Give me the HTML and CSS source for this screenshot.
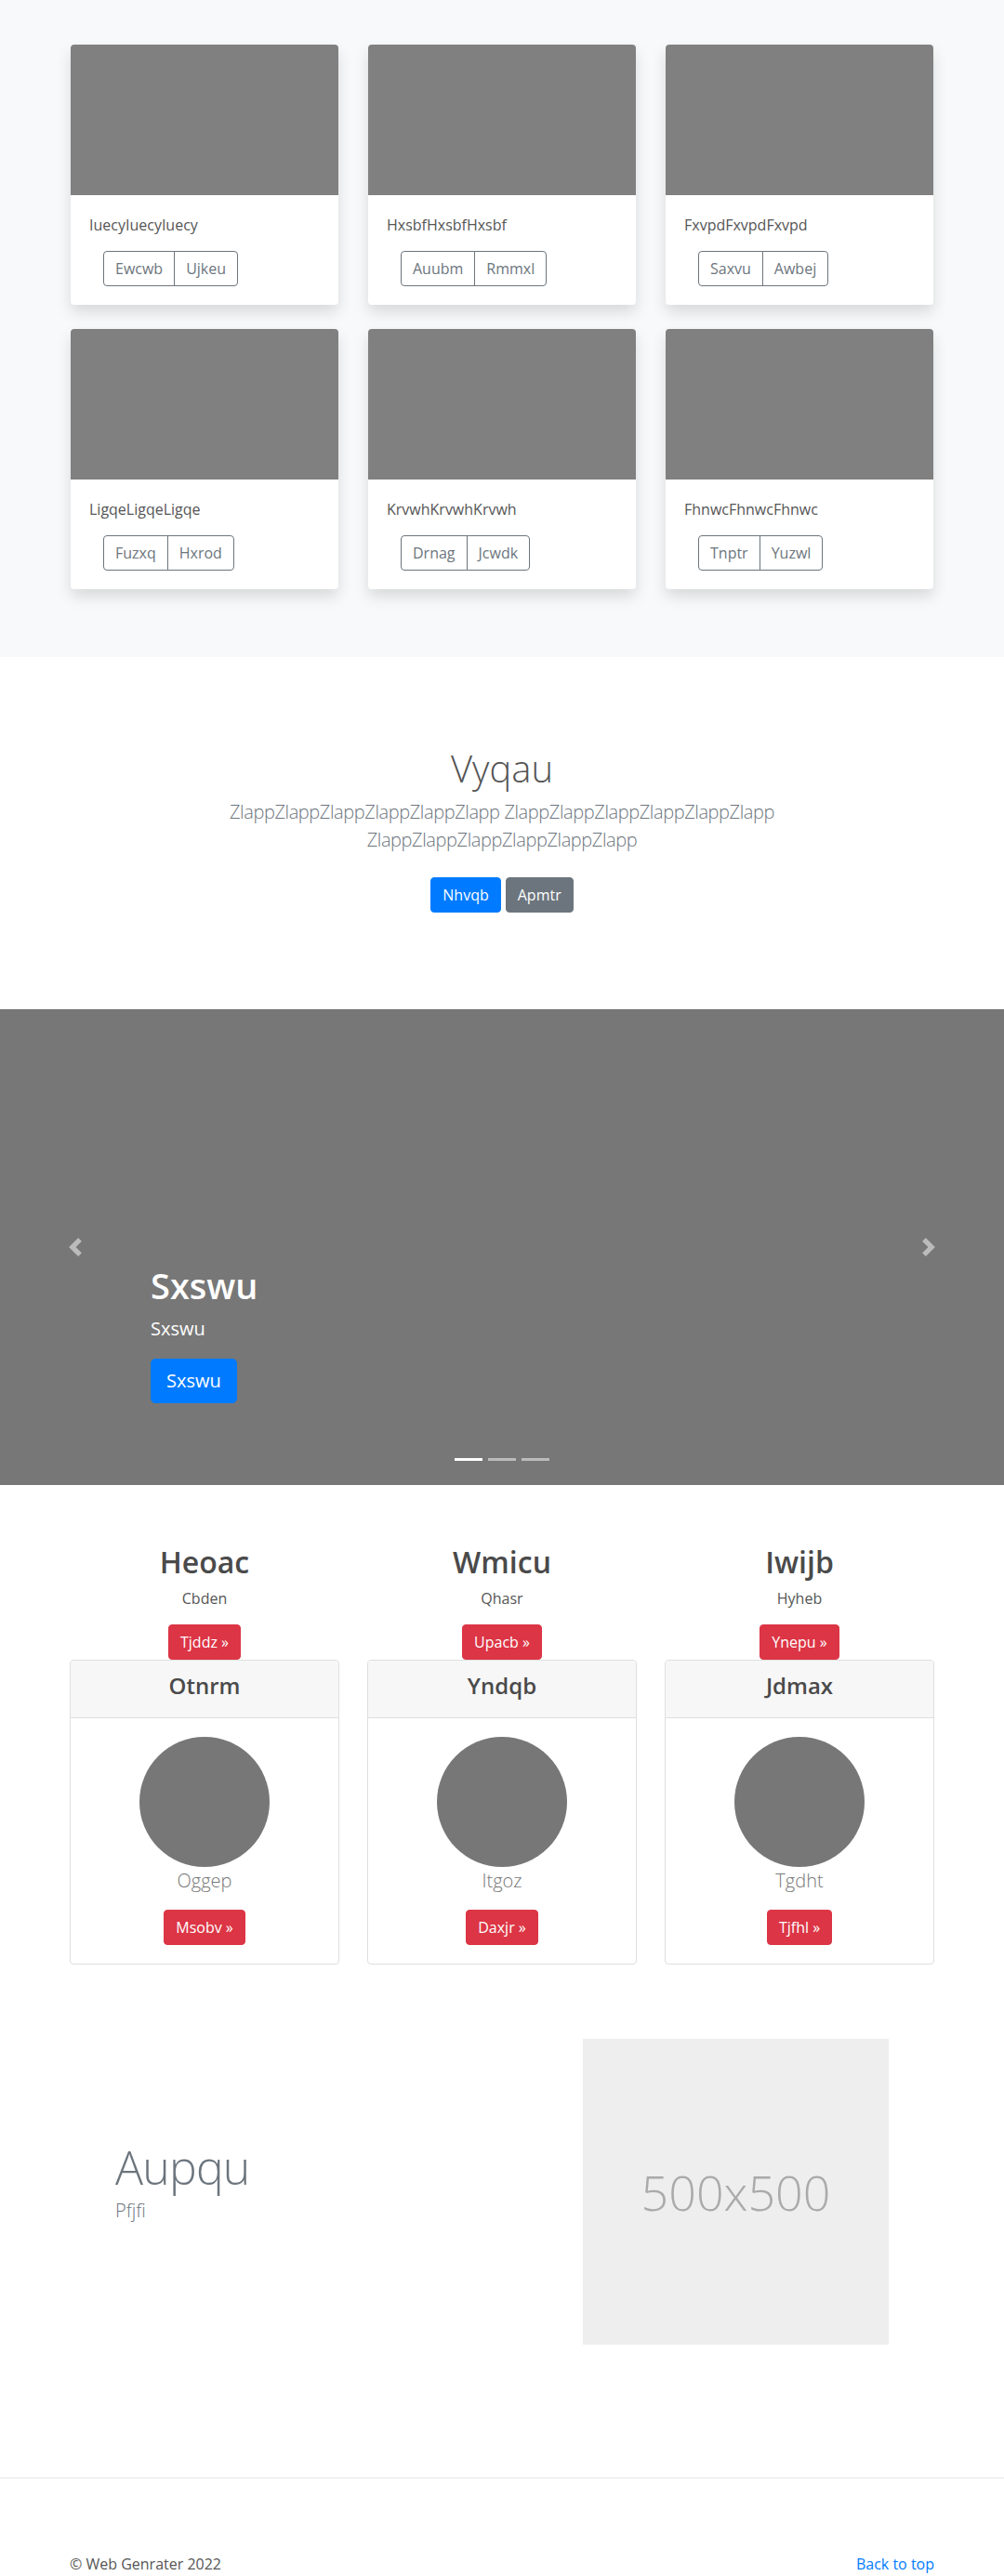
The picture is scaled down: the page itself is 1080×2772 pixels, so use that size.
FILE: index.html
```html
<!DOCTYPE html>
<html lang="en">
<head>
<meta charset="utf-8">
<title>Album</title>
<link rel="stylesheet" href="styles.css">
</head>
<body>
<main>
  <section class="album">
    <div class="album-grid">
      <div class="acard">
        <div class="acard-img"></div>
        <div class="acard-body">
          <p class="acard-text">IuecyIuecyIuecy</p>
          <div class="btn-group"><button class="btn-outline">Ewcwb</button><button class="btn-outline">Ujkeu</button></div>
        </div>
      </div>
      <div class="acard">
        <div class="acard-img"></div>
        <div class="acard-body">
          <p class="acard-text">HxsbfHxsbfHxsbf</p>
          <div class="btn-group"><button class="btn-outline">Auubm</button><button class="btn-outline">Rmmxl</button></div>
        </div>
      </div>
      <div class="acard">
        <div class="acard-img"></div>
        <div class="acard-body">
          <p class="acard-text">FxvpdFxvpdFxvpd</p>
          <div class="btn-group"><button class="btn-outline">Saxvu</button><button class="btn-outline">Awbej</button></div>
        </div>
      </div>
      <div class="acard">
        <div class="acard-img"></div>
        <div class="acard-body">
          <p class="acard-text">LigqeLigqeLigqe</p>
          <div class="btn-group"><button class="btn-outline">Fuzxq</button><button class="btn-outline">Hxrod</button></div>
        </div>
      </div>
      <div class="acard">
        <div class="acard-img"></div>
        <div class="acard-body">
          <p class="acard-text">KrvwhKrvwhKrvwh</p>
          <div class="btn-group"><button class="btn-outline">Drnag</button><button class="btn-outline">Jcwdk</button></div>
        </div>
      </div>
      <div class="acard">
        <div class="acard-img"></div>
        <div class="acard-body">
          <p class="acard-text">FhnwcFhnwcFhnwc</p>
          <div class="btn-group"><button class="btn-outline">Tnptr</button><button class="btn-outline">Yuzwl</button></div>
        </div>
      </div>
    </div>
  </section>

  <section class="jumbo">
    <h1 class="jumbo-title">Vyqau</h1>
    <p class="jumbo-lead">ZlappZlappZlappZlappZlappZlapp ZlappZlappZlappZlappZlappZlapp ZlappZlappZlappZlappZlappZlapp</p>
    <div class="jumbo-actions">
      <a class="btn btn-primary" href="#">Nhvqb</a>
      <a class="btn btn-secondary" href="#">Apmtr</a>
    </div>
  </section>

  <section class="carousel">
    <a class="carousel-control prev" href="#">
      <svg width="20" height="20" viewBox="0 0 8 8"><path d="M5.25 0l-4 4 4 4 1.5-1.5L4.25 4l2.5-2.5L5.25 0z"/></svg>
    </a>
    <a class="carousel-control next" href="#">
      <svg width="20" height="20" viewBox="0 0 8 8"><path d="M2.75 0l-1.5 1.5L3.75 4l-2.5 2.5L2.75 8l4-4-4-4z"/></svg>
    </a>
    <div class="carousel-caption">
      <h1 class="caption-title">Sxswu</h1>
      <p class="caption-text">Sxswu</p>
      <a class="btn btn-lg btn-primary" href="#">Sxswu</a>
    </div>
    <ol class="indicators">
      <li class="active"></li>
      <li></li>
      <li></li>
    </ol>
  </section>

  <section class="marketing">
    <div class="mk-col">
      <h2 class="mk-title">Heoac</h2>
      <p class="mk-text">Cbden</p>
      <a class="btn btn-danger" href="#">Tjddz »</a>
      <div class="mcard">
        <div class="mcard-header"><h4 class="mcard-title">Otnrm</h4></div>
        <div class="mcard-body">
          <div class="circle"></div>
          <p class="mcard-lead">Oggep</p>
          <a class="btn btn-danger" href="#">Msobv »</a>
        </div>
      </div>
    </div>
    <div class="mk-col">
      <h2 class="mk-title">Wmicu</h2>
      <p class="mk-text">Qhasr</p>
      <a class="btn btn-danger" href="#">Upacb »</a>
      <div class="mcard">
        <div class="mcard-header"><h4 class="mcard-title">Yndqb</h4></div>
        <div class="mcard-body">
          <div class="circle"></div>
          <p class="mcard-lead">Itgoz</p>
          <a class="btn btn-danger" href="#">Daxjr »</a>
        </div>
      </div>
    </div>
    <div class="mk-col">
      <h2 class="mk-title">Iwijb</h2>
      <p class="mk-text">Hyheb</p>
      <a class="btn btn-danger" href="#">Ynepu »</a>
      <div class="mcard">
        <div class="mcard-header"><h4 class="mcard-title">Jdmax</h4></div>
        <div class="mcard-body">
          <div class="circle"></div>
          <p class="mcard-lead">Tgdht</p>
          <a class="btn btn-danger" href="#">Tjfhl »</a>
        </div>
      </div>
    </div>
  </section>

  <section class="featurette">
    <div class="feat-text">
      <h2 class="feat-title">Aupqu</h2>
      <p class="feat-lead">Pfjfi</p>
    </div>
    <div class="feat-img"><span>500x500</span></div>
  </section>

  <hr class="divider">

  <footer class="footer">
    <p class="footer-copy">© Web Genrater 2022</p>
    <a class="footer-top" href="#">Back to top</a>
  </footer>
</main>
</body>
</html>
```

FILE: styles.css
```css
* { box-sizing: border-box; }

html, body {
  margin: 0;
  padding: 0;
}

body {
  font-family: "Open Sans", "Noto Sans", "Liberation Sans", sans-serif;
  font-size: 16px;
  line-height: 24px;
  color: #555;
  background: #fff;
}

a { text-decoration: none; }

p, h1, h2, h4 { margin: 0; }

/* ---------- buttons ---------- */
.btn {
  display: inline-block;
  font-size: 16px;
  line-height: 24px;
  padding: 6px 12px;
  border: 1px solid transparent;
  border-radius: 4px;
  color: #fff;
  font-family: inherit;
}
.btn-primary { background: #007bff; border-color: #007bff; }
.btn-secondary { background: #6c757d; border-color: #6c757d; }
.btn-danger { background: #dc3545; border-color: #dc3545; }
.btn-lg {
  font-size: 20px;
  line-height: 30px;
  padding: 8px 16px;
  border-radius: 5px;
}

.btn-group {
  display: flex;
  margin-left: 15px;
}
.btn-outline {
  font-family: inherit;
  font-size: 16px;
  line-height: 24px;
  padding: 6px 12px;
  background: transparent;
  color: #6c757d;
  border: 1px solid #6c757d;
  border-radius: 0;
}
.btn-outline:first-child { border-radius: 4px 0 0 4px; }
.btn-outline:last-child { border-radius: 0 4px 4px 0; margin-left: -1px; }

/* ---------- album ---------- */
.album {
  background: #f8f9fa;
  padding: 48px 0 73px;
}
.album-grid {
  width: 928px;
  margin: 0 auto;
  display: grid;
  grid-template-columns: repeat(3, 288px);
  column-gap: 32px;
  row-gap: 26px;
}
.acard {
  background: #fff;
  border-radius: 4px;
  box-shadow: 0 8px 16px rgba(0, 0, 0, 0.13);
  overflow: hidden;
}
.acard-img {
  height: 162px;
  background: #808080;
}
.acard-body { padding: 20px; }
.acard-text {
  margin-bottom: 16px;
  color: #555;
}

/* ---------- jumbotron ---------- */
.jumbo {
  padding: 96px 0 104px;
  text-align: center;
}
.jumbo-title {
  font-size: 40px;
  line-height: 48px;
  font-weight: 300;
  color: #555;
  margin-bottom: 8px;
}
.jumbo-lead {
  max-width: 640px;
  margin: 0 auto 25px;
  font-size: 20px;
  line-height: 30px;
  font-weight: 300;
  letter-spacing: -0.4px;
  color: #6c757d;
}
.jumbo-actions {
  display: flex;
  justify-content: center;
  gap: 5px;
}

/* ---------- carousel ---------- */
.carousel {
  position: relative;
  height: 512px;
  background: #777;
}
.carousel-control {
  position: absolute;
  top: 0;
  bottom: 0;
  width: 15%;
  display: flex;
  align-items: center;
  justify-content: center;
}
.carousel-control svg { fill: rgba(255, 255, 255, 0.5); }
.carousel-control.prev { left: 0; }
.carousel-control.next { right: 0; }
.carousel-caption {
  position: absolute;
  left: 15%;
  right: 15%;
  bottom: 88px;
  color: #fff;
  text-align: left;
}
.caption-title {
  font-size: 38px;
  line-height: 48px;
  font-weight: 600;
  margin-bottom: 8px;
}
.caption-text {
  font-size: 20px;
  line-height: 30px;
  margin-bottom: 17px;
}
.indicators {
  position: absolute;
  left: 0;
  right: 0;
  bottom: 26px;
  margin: 0;
  padding: 0;
  list-style: none;
  display: flex;
  justify-content: center;
}
.indicators li {
  width: 30px;
  height: 3px;
  margin: 0 3px;
  background: rgba(255, 255, 255, 0.5);
}
.indicators li.active { background: #fff; }

/* ---------- marketing ---------- */
.marketing {
  width: 930px;
  margin: 0 auto;
  padding-top: 64px;
  display: grid;
  grid-template-columns: repeat(3, 290px);
  column-gap: 30px;
  text-align: center;
}
.mk-col { display: flex; flex-direction: column; align-items: center; }
.mk-title {
  font-size: 32px;
  line-height: 38px;
  font-weight: 600;
  color: #4a4a4a;
  margin-bottom: 8px;
}
.mk-text {
  margin-bottom: 16px;
  color: #555;
}
.mcard {
  align-self: stretch;
  border: 1px solid #dfdfdf;
  border-radius: 4px;
  overflow: hidden;
}
.mcard-header {
  background: #f7f7f7;
  border-bottom: 1px solid #dfdfdf;
  padding: 12px 20px;
}
.mcard-title {
  font-size: 24px;
  line-height: 29px;
  font-weight: 600;
  color: #4a4a4a;
  margin-bottom: 8px;
}
.mcard-body {
  padding: 20px;
  display: flex;
  flex-direction: column;
  align-items: center;
}
.circle {
  width: 140px;
  height: 140px;
  border-radius: 50%;
  background: #777;
}
.mcard-lead {
  font-size: 20px;
  line-height: 30px;
  font-weight: 300;
  color: #777;
  margin-bottom: 16px;
}

/* ---------- featurette ---------- */
.featurette {
  width: 960px;
  margin: 0 auto;
  padding: 80px 64px 143px;
  display: flex;
  align-items: center;
}
.feat-text { flex: 1; }
.feat-title {
  font-size: 50px;
  line-height: 50px;
  font-weight: 300;
  letter-spacing: -0.8px;
  color: #6c757d;
  margin-bottom: 7px;
}
.feat-lead {
  font-size: 20px;
  line-height: 30px;
  font-weight: 300;
  color: #6c757d;
  margin-bottom: 16px;
}
.feat-img {
  width: 329px;
  height: 329px;
  background: #eee;
  display: flex;
  align-items: center;
  justify-content: center;
}
.feat-img span {
  font-size: 52px;
  font-weight: 300;
  color: #aaa;
  line-height: 1;
}

/* ---------- footer ---------- */
.divider {
  margin: 0;
  border: 0;
  border-top: 1px solid #e5e5e5;
}
.footer {
  width: 930px;
  margin: 0 auto;
  padding: 80px 0 48px;
  display: flex;
  justify-content: space-between;
}
.footer-copy { color: #555; }
.footer-top { color: #007bff; }
```
